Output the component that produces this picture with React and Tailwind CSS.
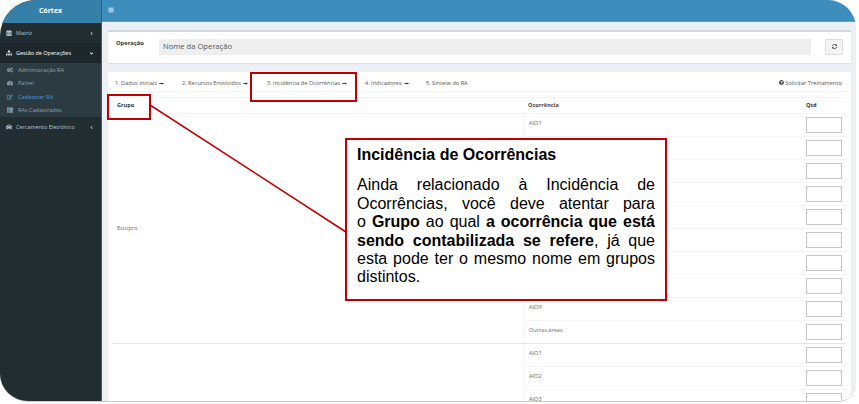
import React from "react";
import { FaCalendarAlt, FaSitemap, FaCogs, FaTachometerAlt, FaEdit, FaThList, FaCar, FaAngleLeft, FaAngleDown, FaBars, FaSyncAlt, FaQuestionCircle, FaLongArrowAltRight } from "react-icons/fa";

const Item = ({ icon: I, label, right, cls = "" }) => (
  <div className={`flex items-center h-5 pt-[1px] pl-[6px] pr-[7px] text-[#b8c7ce] ${cls}`}>
    <I className="w-[6px] h-[6px] mr-[4px] shrink-0" />
    <span className="flex-1 text-[5.5px] font-medium">{label}</span>
    {right}
  </div>
);
const Sub = ({ icon: I, label, cls = "text-[#8aa4af]" }) => (
  <div className={`flex items-center h-[13.5px] pl-[7px] ${cls}`}>
    <I className="w-[6px] h-[6px] mr-[5px] shrink-0" />
    <span className="text-[5.6px]">{label}</span>
  </div>
);
const Row = ({ label, brown }) => (
  <div className="flex h-[23px] border-b border-[#f4f4f4] last:border-b-0 last:h-[22px]">
    <div className={`w-[268px] pl-[4px] pt-[3px] text-[5.6px] leading-[12px] border-l border-[#f4f4f4] ${brown ? "text-[#7a6a55]" : "text-[#666]"}`}>{label}</div>
    <div className="pt-[3px]"><div className="ml-[14px] w-[36px] h-[16px] bg-white border border-[#c8c8c8]" /></div>
  </div>
);
const Arrow = () => <FaLongArrowAltRight className="inline w-[7px] h-[5px] ml-[1px] text-[#444]" />;
const Step = ({ children, cls = "" }) => <span className={`text-[5.6px] text-[#555] ${cls}`}>{children}<Arrow /></span>;

export default function App() {
  const first = ["AIO1", "", "", "", "", "", "", "", "AIO9", "Outras áreas"];
  return (
    <div className="relative w-[859px] h-[404px] bg-white overflow-hidden" style={{ fontFamily: '"Open Sans", sans-serif' }}>
      <div className="flex w-[856px] h-[402px] rounded-tl-[36px] rounded-tr-[28px] rounded-bl-[28px] rounded-br-[18px] overflow-hidden border-b border-[#ccc]">
        <aside className="w-[102px] shrink-0 bg-[#222d32] border-r border-[#555]">
          <div className="h-[22.5px] bg-[#367fa9] flex items-center justify-center text-white text-[7px] font-bold">Córtex</div>
          <div>
            <Item icon={FaCalendarAlt} label="Matriz" right={<FaAngleLeft className="w-[5px] h-[5px]" />} />
            <Item icon={FaSitemap} label="Gestão de Operações" right={<FaAngleDown className="w-[5px] h-[5px]" />} cls="bg-[#1e282c] text-white" />
            <div className="bg-[#2c3b41] h-[54px] py-[0.5px]">
              <Sub icon={FaCogs} label="Administração RA" />
              <Sub icon={FaTachometerAlt} label="Painel" />
              <Sub icon={FaEdit} label="Cadastrar RA" cls="text-[#3c8dbc] font-semibold" />
              <Sub icon={FaThList} label="RAs Cadastrados" />
            </div>
            <Item icon={FaCar} label="Cercamento Eletrônico" right={<FaAngleLeft className="w-[5px] h-[5px]" />} />
          </div>
        </aside>
        <main className="flex-1 min-w-0 bg-[#ecf0f5] flex flex-col">
          <div className="h-[22.5px] bg-[#3c8dbc] border-b border-[#5c9fc6] flex items-center pl-[6px] text-white"><FaBars className="w-[6px] h-[6px]" /></div>
          <div className="pl-[6px] pr-[5px] pt-[8px] flex flex-col gap-[9px] min-h-0">
            <section className="bg-white h-[33px] border-t-2 border-[#d2d6de] flex items-start pl-[8px] pr-[8px] pt-[7px] shadow-[0_1px_1px_rgba(0,0,0,0.06)] shrink-0">
              <span className="w-[43px] text-[5.8px] font-bold text-[#333]">Operação</span>
              <div className="flex-1 h-[16px] bg-[#eeeeee] flex items-center px-[4px] text-[7.6px] text-[#555]">Nome da Operação</div>
              <div className="ml-[14px] w-[18px] h-[16px] bg-[#f4f4f4] border border-[#ddd] rounded-[1px] flex items-center justify-center text-[#444]"><FaSyncAlt className="w-[5px] h-[5px]" /></div>
            </section>
            <section className="bg-white pl-[5px] pr-[5px] shrink-0">
              <div className="h-[20px] pt-[3px] flex items-center border-b border-[#f4f4f4] -mx-[5px] px-[7px]">
                <Step cls="w-[67px]">1. Dados Iniciais</Step>
                <Step cls="w-[85px]">2. Recursos Envolvidos</Step>
                <Step cls="w-[98px]">3. Incidência de Ocorrências</Step>
                <Step cls="w-[61px]">4. Indicadores</Step>
                <span className="flex-1 text-[5.6px] text-[#555]">5. Síntese do RA</span>
                <span className="flex items-center text-[5.7px] text-[#555] mr-[2px]"><FaQuestionCircle className="w-[5px] h-[5px] mr-[1px] text-[#444]" />Solicitar Treinamento</span>
              </div>
              <div className="flex h-[17px] items-center mt-[5px] border-t border-b border-[#f4f4f4] text-[5.6px] font-bold text-[#333]">
                <div className="w-[415px] pl-[4px]">Grupo</div>
                <div className="w-[278px] text-[#5a3a2a]">Ocorrência</div>
                <div>Qtd</div>
              </div>
              <div className="flex border-b border-[#e4e4e4]">
                <div className="w-[411px] flex items-center text-[5.6px] text-[#666] pl-[4px]"><span>Estupro</span></div>
                <div className="flex-1">{first.map((l, i) => <Row key={i} label={l} brown={l === "Outras áreas"} />)}</div>
              </div>
              <div className="flex">
                <div className="w-[411px]" />
                <div className="flex-1">{["AIO1", "AIO2", "AIO3"].map((l, i) => <Row key={i} label={l} />)}</div>
              </div>
            </section>
          </div>
        </main>
      </div>

      <div className="absolute left-[107px] top-[94px] w-[44px] h-[26px] border-2 border-[#c00000]" />
      <div className="absolute left-[250px] top-[72px] w-[107px] h-[30px] border-2 border-[#c00000]" />
      <svg className="absolute left-0 top-0 pointer-events-none" width="859" height="404"><line x1="150" y1="105" x2="346" y2="232" stroke="#c00000" strokeWidth="1.5" /></svg>
      <div className="absolute left-[345px] top-[138px] w-[322px] h-[163px] bg-white border-2 border-[#c00000] pl-[10px] pr-[10px] pt-[6px] text-black" style={{ fontFamily: '"Liberation Sans", sans-serif' }}>
        <p className="text-[16px] leading-[18.4px] font-bold">Incidência de Ocorrências</p>
        <p className="mt-[12px] text-[16px] leading-[18.4px] text-justify">Ainda relacionado à Incidência de Ocorrências, você deve atentar para <span className="whitespace-nowrap">o <b>Grupo</b></span> ao qual <b>a ocorrência que está sendo contabilizada se refere</b>, já que esta pode ter o mesmo nome em grupos distintos.</p>
      </div>
    </div>
  );
}
